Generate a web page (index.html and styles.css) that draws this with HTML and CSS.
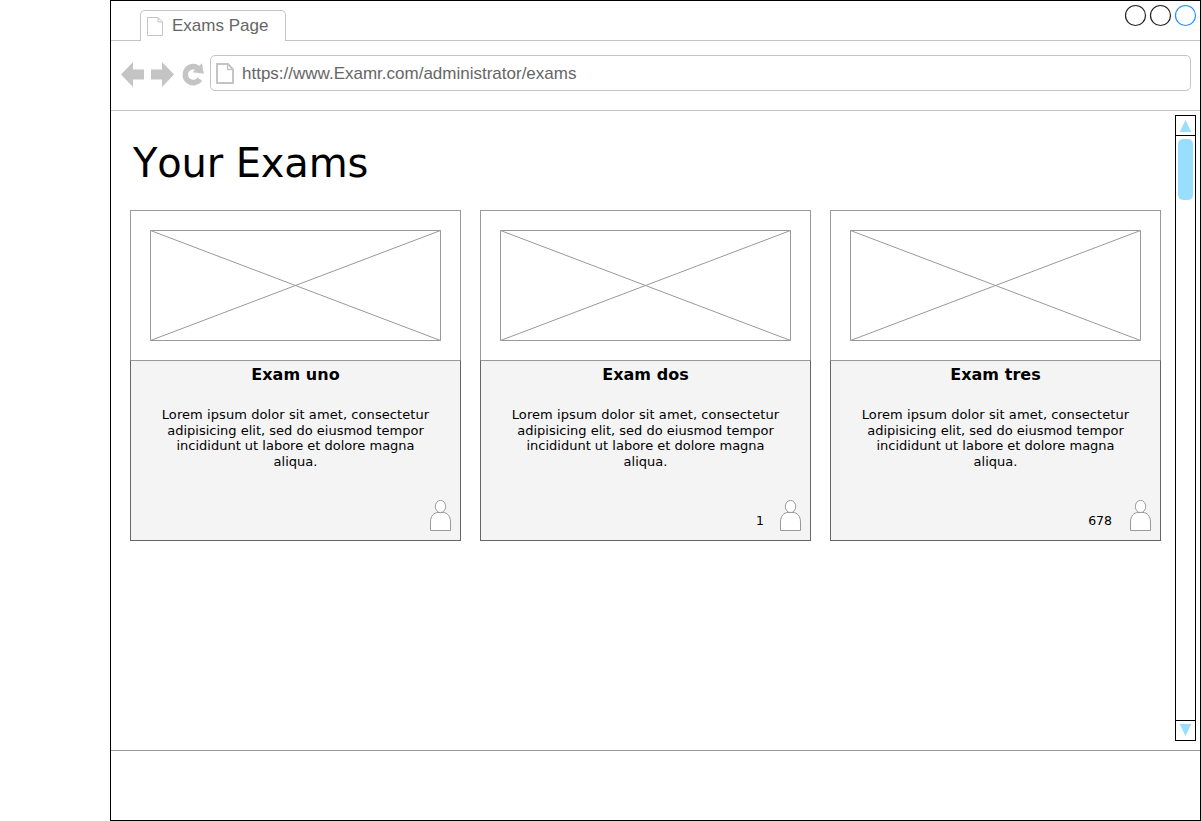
FILE: index.html
```html
<!DOCTYPE html>
<html lang="en">
<head>
<meta charset="utf-8">
<title>Exams Page</title>
<link rel="stylesheet" href="styles.css">
</head>
<body>
<svg width="0" height="0" class="defs">
  <symbol id="person" viewBox="0 0 22 32"><path d="M.5 30.5V22C.5 16 4 12.5 8 12.5H13C17 12.5 20.5 16 20.5 22V30.5Z"/><ellipse cx="10.5" cy="6.5" rx="5.2" ry="6.1"/></symbol>
  <symbol id="cross" viewBox="0 0 291 111"><path d="M.5 .5H290.5V110.5H.5ZM.5 .5L290.5 110.5M.5 110.5L290.5 .5"/></symbol>
</svg>
<div class="window">
  <header class="tabs">
    <div class="tab">
      <svg class="tab-icon" width="16" height="19" viewBox="0 0 16 19"><path d="M.5 .5H11L15.5 5V18.5H.5ZM11 .5V5H15.5"/></svg>
      <span>Exams Page</span>
    </div>
    <svg class="controls" width="72" height="22" viewBox="0 0 72 22"><circle cx="10.5" cy="10.5" r="10"/><circle cx="35.5" cy="10.5" r="10"/><circle class="blue" cx="60.5" cy="10.5" r="10"/></svg>
  </header>
  <nav class="toolbar">
    <svg class="nav-icons" width="90" height="28" viewBox="0 0 90 28">
      <path d="M1 13.5L13 1V8.5H24V18.5H13V26ZM54 13.5L42 1V8.5H31V18.5H42V26Z"/>
      <path class="ring" d="M79.8 18.2A8 8 0 1 1 77.8 7"/>
      <path d="M82 2.3L83.8 12.8L72.5 11.2Z"/>
    </svg>
    <div class="address">
      <svg class="page-icon" width="18" height="21" viewBox="0 0 18 21"><path d="M1 1H12L17 6.3V20H1Z"/><path class="fold" d="M11.5 1V6.5H17"/></svg>
      <span>https://www.Examr.com/administrator/exams</span>
    </div>
  </nav>
  <div class="viewport">
    <main class="content">
      <h1>Your Exams</h1>
      <div class="cards">
        <article class="card">
          <div class="media"><svg width="291" height="111"><use href="#cross"/></svg></div>
          <div class="body">
            <h2>Exam uno</h2>
            <p><span class="lead">Lorem ipsum dolor sit amet, consectetur</span><br>adipisicing elit, sed do eiusmod tempor<br>incididunt ut labore et dolore magna<br>aliqua.</p>
            <div class="people"><svg width="22" height="32"><use href="#person"/></svg></div>
          </div>
        </article>
        <article class="card">
          <div class="media"><svg width="291" height="111"><use href="#cross"/></svg></div>
          <div class="body">
            <h2>Exam dos</h2>
            <p><span class="lead">Lorem ipsum dolor sit amet, consectetur</span><br>adipisicing elit, sed do eiusmod tempor<br>incididunt ut labore et dolore magna<br>aliqua.</p>
            <div class="people single"><span>1</span><svg width="22" height="32"><use href="#person"/></svg></div>
          </div>
        </article>
        <article class="card">
          <div class="media"><svg width="291" height="111"><use href="#cross"/></svg></div>
          <div class="body">
            <h2>Exam tres</h2>
            <p><span class="lead">Lorem ipsum dolor sit amet, consectetur</span><br>adipisicing elit, sed do eiusmod tempor<br>incididunt ut labore et dolore magna<br>aliqua.</p>
            <div class="people"><span>678</span><svg width="22" height="32"><use href="#person"/></svg></div>
          </div>
        </article>
      </div>
    </main>
    <aside class="scrollbar">
      <div class="arrow up"><svg width="13" height="12" viewBox="0 0 13 12"><path d="M6.5 0L12.3 12H.7Z"/></svg></div>
      <div class="track"><div class="thumb"></div></div>
      <div class="arrow down"><svg width="13" height="12" viewBox="0 0 13 12"><path d="M6.5 12L.7 0H12.3Z"/></svg></div>
    </aside>
  </div>
</div>
</body>
</html>
```
FILE: styles.css
```css
* { box-sizing: border-box; }
body { margin: 0; background: #fff; color: #000; font-family: "DejaVu Sans", sans-serif; overflow: hidden; }
svg { display: block; flex: none; }
.defs { position: absolute; }
.window { width: 1091px; height: 821px; margin-left: 110px; border: 1px solid #000; }

.tabs { height: 40px; border-bottom: 1px solid #c4c4c4; display: flex; justify-content: space-between; padding: 9px 3px 0 29px; }
.tab { width: 146px; height: 31px; border: 1px solid #c4c4c4; border-bottom: 0; border-radius: 5px 5px 0 0; background: #fff; display: flex; padding: 6px 0 0 6px; gap: 9px; color: #666; font: 17px/18px "Liberation Sans", sans-serif; white-space: nowrap; }
.tab-icon { fill: #fff; stroke: #c4c4c4; }
.controls { margin-top: -5px; fill: #fff; stroke: #222; stroke-width: 1.2; overflow: visible; }
.controls .blue { stroke: #1e90ff; }

.toolbar { height: 70px; border-bottom: 1px solid #c4c4c4; display: flex; padding: 14px 9px 0 9px; }
.nav-icons { margin-top: 6px; fill: #c4c4c4; }
.nav-icons .ring { fill: none; stroke: #c4c4c4; stroke-width: 5.6; }
.address { flex: 1; height: 36px; border: 1px solid #c4c4c4; border-radius: 5px; display: flex; padding: 7px 0 0 5px; gap: 8px; color: #666; font: 17px/22px "Liberation Sans", sans-serif; white-space: nowrap; }
.page-icon { fill: none; stroke: #c4c4c4; stroke-width: 2; }
.page-icon .fold { stroke-width: 1.3; }

.viewport { height: 640px; border-bottom: 1px solid #999; display: flex; justify-content: space-between; padding: 4px 4px 0 19px; }
.content { width: 1031px; padding-top: 25px; }
h1 { margin: 0; height: 70px; padding-left: 3px; font-size: 40px; line-height: 46px; font-weight: 400; font-kerning: none; letter-spacing: -0.15px; white-space: nowrap; }
.cards { display: flex; gap: 19px; }
.card { width: 331px; height: 331px; }
.media { height: 150px; border: 1px solid #999; border-bottom: 0; padding: 19px; stroke: #999; fill: none; }
.body { height: 181px; border: 1px solid #666; border-top-color: #999; background: #f4f4f4; text-align: center; display: flex; flex-direction: column; }
h2 { margin: 4px 0 0; font-size: 16px; line-height: 20px; font-weight: 700; letter-spacing: 0.05px; }
p { margin: 22px 0 0; font-size: 13px; line-height: 15.6px; white-space: nowrap; }
.lead { letter-spacing: 0.08px; }
.people { margin-top: auto; padding: 0 8px 8px 0; display: flex; justify-content: flex-end; gap: 18px; font-size: 12.5px; line-height: 42px; height: 40px; }
.people.single { gap: 16px; }
.people svg { fill: #fff; stroke: #999; }

.scrollbar { width: 21px; height: 626px; border: 1px solid #000; display: flex; flex-direction: column; }
.arrow { fill: #9df; height: 19px; padding: 4px 3px 0; }
.down { padding-top: 3px; }
.track { flex: 1; border: 1px solid #000; border-width: 1px 0; padding: 3px 2px 0; }
.thumb { height: 61px; background: #9df; border-radius: 5px; }
```
